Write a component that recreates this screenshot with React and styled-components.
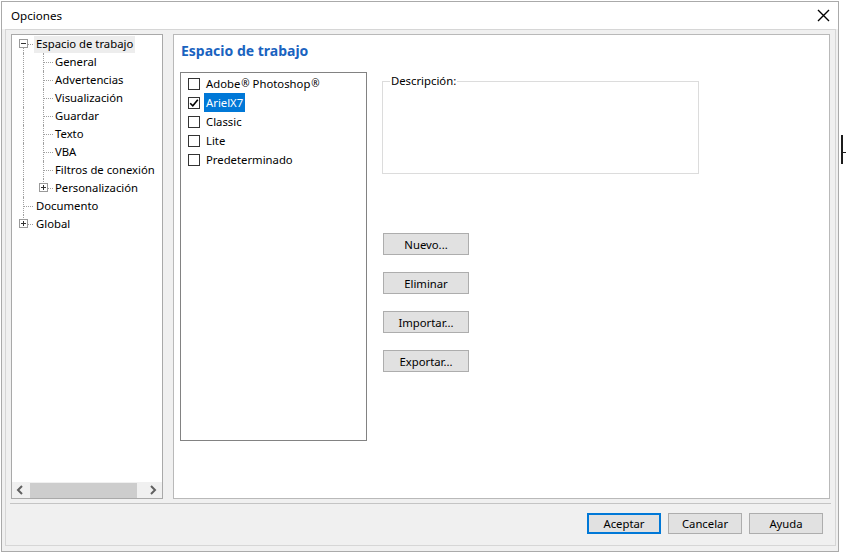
import React from "react";
import styled, { createGlobalStyle, css } from "styled-components";

const GlobalStyle = createGlobalStyle`
  html, body {
    margin: 0;
    padding: 0;
    background: #ffffff;
  }
  body {
    font-family: "Noto Sans", "Open Sans", sans-serif;
    font-size: 11.3px;
    color: #000000;
  }
`;

const Page = styled.div`
  display: flex;
  align-items: flex-start;
  padding: 1px 0 0 1px;
`;

const Window = styled.div`
  width: 838px;
  height: 551px;
  box-sizing: border-box;
  border: 1px solid #aaaaaa;
  background: #f0f0f0;
  display: flex;
  flex-direction: column;
`;

const TitleBar = styled.div`
  height: 27px;
  background: #ffffff;
  display: flex;
  align-items: center;
  justify-content: space-between;
  padding: 0 7px 0 9px;
  font-size: 11.6px;
`;

const CloseBtn = styled.div`
  width: 16px;
  height: 16px;
  display: flex;
  align-items: center;
  justify-content: center;
  margin-top: -1px;
`;

const Body = styled.div`
  flex: 1;
  padding: 0 2px 5px 3px;
  display: flex;
`;

const Frame = styled.div`
  flex: 1;
  border: 1px solid #d6d6d6;
  padding: 4px 5px 0;
  display: flex;
  flex-direction: column;
`;

const ContentArea = styled.div`
  display: flex;
  gap: 10px;
  height: 465px;
  padding: 0 1px 4px;
  margin: 0 -1px;
  border-bottom: 1px solid #c4c4c4;
`;

/* tree */

const TreePanel = styled.div`
  width: 152px;
  box-sizing: border-box;
  border: 1px solid #a9a9a9;
  background: #ffffff;
  display: flex;
  flex-direction: column;
`;

const TreeList = styled.div`
  flex: 1;
  padding-left: 1px;
`;

const TreeRow = styled.div`
  display: flex;
  height: 18px;
  align-items: stretch;
`;

const Guide = styled.div`
  position: relative;
  width: 20px;
  flex: none;

  ${(p) =>
    (p.$up || p.$down) &&
    css`
      &::before {
        content: "";
        position: absolute;
        left: 10px;
        top: ${p.$up ? "0" : "9px"};
        bottom: ${p.$down ? "0" : "9px"};
        border-left: 1px dotted #a0a0a0;
      }
    `}

  ${(p) =>
    p.$h &&
    css`
      &::after {
        content: "";
        position: absolute;
        left: 11px;
        right: 0;
        top: 9px;
        border-top: 1px dotted #a0a0a0;
      }
    `}
`;

const Expander = styled.span`
  position: absolute;
  z-index: 1;
  left: 6px;
  top: 4px;
  width: 9px;
  height: 9px;
  box-sizing: border-box;
  border: 1px solid #9a9a9a;
  background: #ffffff;

  &::before {
    content: "";
    position: absolute;
    left: 1px;
    top: 3px;
    width: 5px;
    height: 1px;
    background: #333333;
  }

  ${(p) =>
    p.$plus &&
    css`
      &::after {
        content: "";
        position: absolute;
        left: 3px;
        top: 1px;
        width: 1px;
        height: 5px;
        background: #333333;
      }
    `}
`;

const NodeLabel = styled.span`
  margin-left: ${(p) => (p.$root ? "1px" : "0")};
  margin-top: 1px;
  height: 17px;
  line-height: 16px;
  padding: 0 2px;
  white-space: nowrap;
  background: ${(p) => (p.$active ? "#ededed" : "transparent")};
`;

const HScroll = styled.div`
  height: 16px;
  background: #f0f0f0;
  display: flex;
  align-items: center;
  justify-content: space-between;
  padding: 0 5px 0 4px;
`;

const ScrollThumb = styled.div`
  width: 107px;
  height: 15px;
  background: #cdcdcd;
  margin-right: auto;
  margin-left: 6px;
`;

const Arrow = styled.svg`
  flex: none;
`;

/* right side */

const MainPanel = styled.div`
  width: 657px;
  box-sizing: border-box;
  border: 1px solid #b9b9b9;
  background: #ffffff;
  padding: 7px 0 0 6px;
  display: flex;
  flex-direction: column;
`;

const Heading = styled.h1`
  margin: 0 0 12px 1px;
  font-size: 14px;
  line-height: 18px;
  font-weight: 700;
  color: #1a63bf;
`;

const MainRow = styled.div`
  display: flex;
  gap: 15px;
  align-items: flex-start;
`;

const ListBox = styled.div`
  width: 187px;
  height: 369px;
  box-sizing: border-box;
  border: 1px solid #828282;
  padding: 1px 0 0 7px;
`;

const ListItem = styled.div`
  display: flex;
  align-items: center;
  height: 19px;
`;

const CheckBox = styled.span`
  width: 12px;
  height: 12px;
  box-sizing: border-box;
  border: 1px solid #333333;
  background: #ffffff;
  display: flex;
  align-items: center;
  justify-content: center;
  flex: none;
`;

const ItemText = styled.span`
  margin-left: 4px;
  padding: 0 2px;
  height: 19px;
  line-height: 19px;
  white-space: nowrap;
  background: ${(p) => (p.$selected ? "#0078d7" : "transparent")};
  color: ${(p) => (p.$selected ? "#ffffff" : "#000000")};
`;

const Reg = styled.span`
  font-size: 10px;
  vertical-align: 1px;
  margin-left: 1px;
`;

const SideColumn = styled.div`
  display: flex;
  flex-direction: column;
  align-items: flex-start;
`;

const DescBox = styled.fieldset`
  margin: 1px 0 0;
  width: 317px;
  height: 101px;
  box-sizing: border-box;
  border: 1px solid #dcdcdc;
  padding: 0 7px;
`;

const DescLegend = styled.legend`
  padding: 0 1px;
  font-size: 11.3px;
  line-height: 16px;
`;

const ActionList = styled.div`
  display: flex;
  flex-direction: column;
  gap: 17px;
  margin: 59px 0 0 1px;
`;

const Button = styled.button`
  font-family: "Noto Sans", "Open Sans", sans-serif;
  font-size: 11.3px;
  color: #000000;
  background: #e1e1e1;
  border: 1px solid #adadad;
  border-radius: 0;
  padding: 0;
  box-sizing: border-box;
  width: ${(p) => p.$w || 86}px;
  height: ${(p) => p.$h || 22}px;
  ${(p) =>
    p.$default &&
    css`
      border: 2px solid #0078d7;
    `}
`;

const Footer = styled.div`
  display: flex;
  justify-content: flex-end;
  gap: 7px;
  padding: 9px 7px 0 0;
`;

const Backdrop = styled.div`
  width: 7px;
  padding: 134px 0 0 2px;
`;

const BackMark = styled.div`
  position: relative;
  width: 2px;
  height: 29px;
  background: #1c1c1c;

  &::after {
    content: "";
    position: absolute;
    left: 2px;
    top: 17px;
    width: 4px;
    height: 1px;
    background: #1c1c1c;
  }
`;

const treeNodes = [
  { text: "Espacio de trabajo", root: true, active: true, g: [{ down: true, h: true, box: "minus" }] },
  { text: "General", g: [{ up: true, down: true }, { up: true, down: true, h: true }] },
  { text: "Advertencias", g: [{ up: true, down: true }, { up: true, down: true, h: true }] },
  { text: "Visualización", g: [{ up: true, down: true }, { up: true, down: true, h: true }] },
  { text: "Guardar", g: [{ up: true, down: true }, { up: true, down: true, h: true }] },
  { text: "Texto", g: [{ up: true, down: true }, { up: true, down: true, h: true }] },
  { text: "VBA", g: [{ up: true, down: true }, { up: true, down: true, h: true }] },
  { text: "Filtros de conexión", g: [{ up: true, down: true }, { up: true, down: true, h: true }] },
  { text: "Personalización", g: [{ up: true, down: true }, { up: true, h: true, box: "plus" }] },
  { text: "Documento", root: true, g: [{ up: true, down: true, h: true }] },
  { text: "Global", root: true, g: [{ up: true, h: true, box: "plus" }] },
];

const workspaces = [
  { name: <>Adobe<Reg>®</Reg> Photoshop<Reg>®</Reg></>, key: "ps", checked: false },
  { name: "ArielX7", key: "x7", checked: true, selected: true },
  { name: "Classic", key: "classic", checked: false },
  { name: "Lite", key: "lite", checked: false },
  { name: "Predeterminado", key: "def", checked: false },
];

const Check = () => (
  <svg width="10" height="10" viewBox="0 0 10 10">
    <path d="M1.2 5.2 L3.8 7.8 L8.8 1.8" fill="none" stroke="#000" strokeWidth="1.6" />
  </svg>
);

const App = () => {
  return (
    <>
      <GlobalStyle />
      <Page>
        <Window>
          <TitleBar>
            <span>Opciones</span>
            <CloseBtn>
              <svg width="13" height="13" viewBox="0 0 13 13">
                <path d="M1 1 L12 12 M12 1 L1 12" stroke="#000" strokeWidth="1.4" />
              </svg>
            </CloseBtn>
          </TitleBar>
          <Body>
            <Frame>
              <ContentArea>
                <TreePanel>
                  <TreeList>
                    {treeNodes.map((n) => (
                      <TreeRow key={n.text}>
                        {n.g.map((c, i) => (
                          <Guide key={i} $up={c.up} $down={c.down} $h={c.h}>
                            {c.box && <Expander $plus={c.box === "plus"} />}
                          </Guide>
                        ))}
                        <NodeLabel $root={n.root} $active={n.active}>
                          {n.text}
                        </NodeLabel>
                      </TreeRow>
                    ))}
                  </TreeList>
                  <HScroll>
                    <Arrow width="8" height="10" viewBox="0 0 8 10">
                      <path d="M6 1 L2 5 L6 9" fill="none" stroke="#606060" strokeWidth="2" />
                    </Arrow>
                    <ScrollThumb />
                    <Arrow width="8" height="10" viewBox="0 0 8 10">
                      <path d="M2 1 L6 5 L2 9" fill="none" stroke="#606060" strokeWidth="2" />
                    </Arrow>
                  </HScroll>
                </TreePanel>

                <MainPanel>
                  <Heading>Espacio de trabajo</Heading>
                  <MainRow>
                    <ListBox>
                      {workspaces.map((w) => (
                        <ListItem key={w.key}>
                          <CheckBox>{w.checked && <Check />}</CheckBox>
                          <ItemText $selected={w.selected}>{w.name}</ItemText>
                        </ListItem>
                      ))}
                    </ListBox>
                    <SideColumn>
                      <DescBox>
                        <DescLegend>Descripción:</DescLegend>
                      </DescBox>
                      <ActionList>
                        <Button>Nuevo...</Button>
                        <Button>Eliminar</Button>
                        <Button>Importar...</Button>
                        <Button>Exportar...</Button>
                      </ActionList>
                    </SideColumn>
                  </MainRow>
                </MainPanel>
              </ContentArea>
              <Footer>
                <Button $default $w={74} $h={21}>Aceptar</Button>
                <Button $w={74} $h={21}>Cancelar</Button>
                <Button $w={74} $h={21}>Ayuda</Button>
              </Footer>
            </Frame>
          </Body>
        </Window>
        <Backdrop>
          <BackMark />
        </Backdrop>
      </Page>
    </>
  );
};

export default App;
